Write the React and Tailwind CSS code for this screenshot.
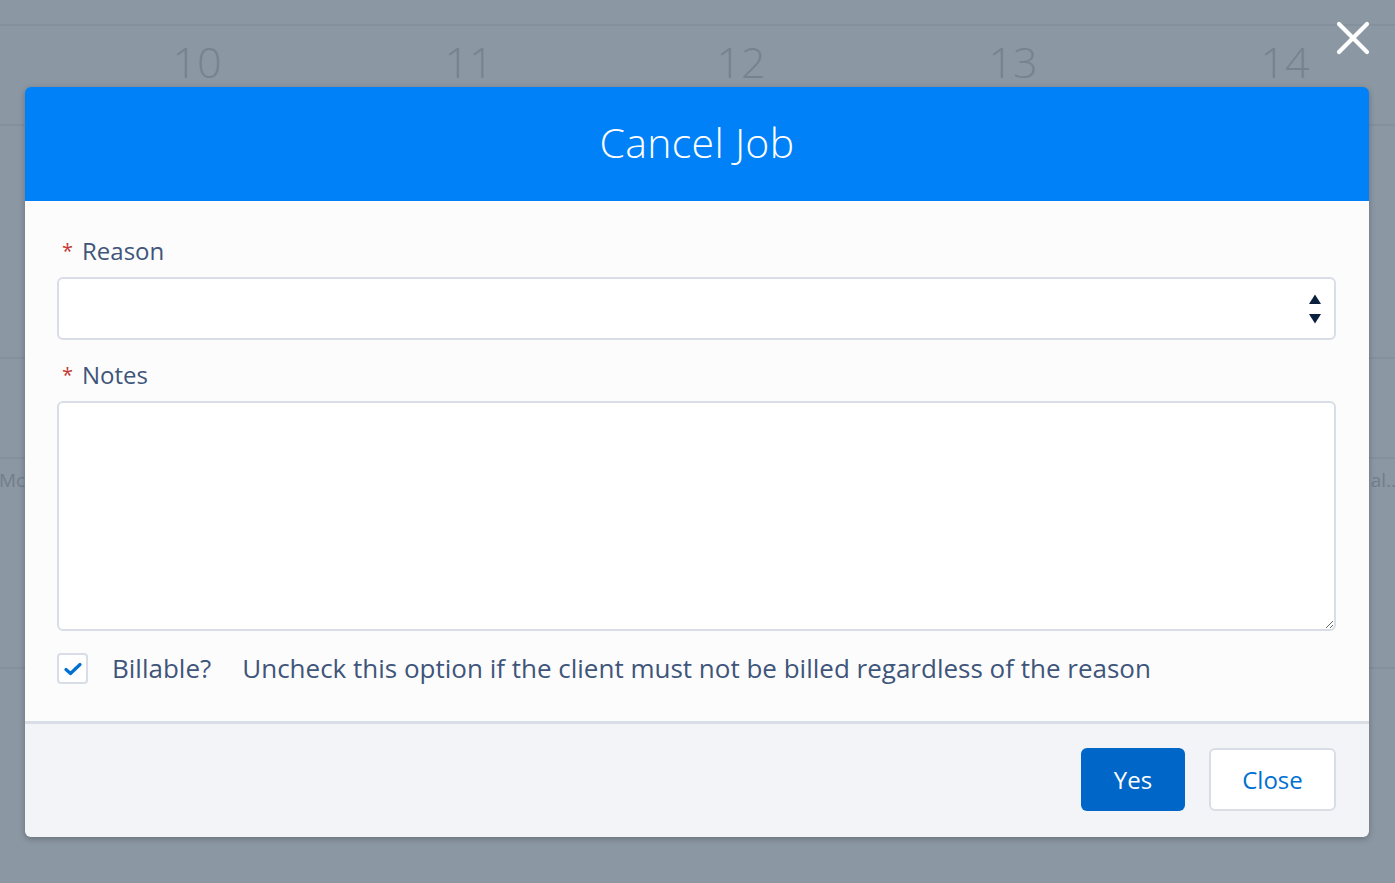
import React from "react";

const font = { fontFamily: '"Open Sans", "Liberation Sans", sans-serif' };

function Background() {
  const nums = ["10", "11", "12", "13", "14"];
  return (
    <div className="flex flex-col w-full h-full">
      <div className="h-[26px] border-b-2 border-[#84909c]" />
      <div className="flex h-[100px] border-b-2 border-[#84909c] pl-[61px]">
        {nums.map((n) => (
          <div key={n} className="w-[272px] shrink-0 flex justify-center pt-[14px] text-[43px] font-light text-[#76838f] leading-none">
            {n}
          </div>
        ))}
      </div>
      <div className="h-[233px] border-b-2 border-[#84909c]" />
      <div className="h-[100px] border-b-2 border-[#84909c]" />
      <div className="flex justify-between h-[210px] border-b-2 border-[#84909c] pt-[7px] text-[19px] text-[#717f8c]">
        <span className="-ml-[1px]">Mc</span>
        <span className="-mr-[6px]">al...</span>
      </div>
    </div>
  );
}

function Label({ children }) {
  return (
    <div className="flex items-center h-[36px] text-[24px] text-[#3f557a]">
      <span className="text-[#c23934] text-[20px] w-[25px] pl-[5px] leading-none">*</span>
      <span>{children}</span>
    </div>
  );
}

export default function App() {
  return (
    <div className="relative w-[1395px] h-[883px] overflow-hidden bg-[#8b97a3]" style={font}>
      <Background />

      <button className="absolute left-[1336px] top-[21px] w-[34px] h-[34px] flex items-center justify-center">
        <svg width="34" height="34" viewBox="0 0 34 34">
          <path d="M3 3 L31 31 M31 3 L3 31" stroke="white" strokeWidth="4.2" strokeLinecap="round" />
        </svg>
      </button>

      <div className="absolute left-[25px] top-[87px] w-[1344px] rounded-[6px] overflow-hidden shadow-[0_2px_6px_rgba(0,0,0,0.25)] flex flex-col">
        <div className="h-[114px] bg-[#0081f8] flex items-center justify-center">
          <h1 className="text-white text-[41px] font-light tracking-[0.3px] pb-[2px]">Cancel Job</h1>
        </div>

        <div className="bg-[#fcfcfd] pt-[32px] pl-[32px] pr-[33px] pb-[37px] flex flex-col">
          <Label>Reason</Label>
          <div className="mt-[8px] h-[63px] rounded-[6px] border-2 border-[#d8dde6] bg-white flex items-center justify-end pr-[12px]">
            <svg width="14" height="32" viewBox="0 0 14 32">
              <path d="M1 11 L7 1.5 L13 11 Z" fill="#0b1f3f" />
              <path d="M1 21 L13 21 L7 30.5 Z" fill="#0b1f3f" />
            </svg>
          </div>

          <div className="mt-[17px]">
            <Label>Notes</Label>
          </div>
          <textarea
            className="mt-[8px] h-[230px] rounded-[6px] border-2 border-[#d8dde6] bg-white outline-none resize-y"
          />

          <div className="mt-[22px] flex items-center h-[31px]">
            <div className="w-[31px] h-[31px] shrink-0 rounded-[4px] border-2 border-[#d8dde6] bg-white flex items-center justify-center">
              <svg width="18" height="14" viewBox="0 0 18 14">
                <path d="M2 7.5 L6.5 11.5 L16 2.5" stroke="#0070d2" strokeWidth="3.2" fill="none" strokeLinecap="round" strokeLinejoin="round" />
              </svg>
            </div>
            <span className="ml-[24px] text-[26px] text-[#3f557a] whitespace-nowrap">Billable?</span>
            <span className="ml-[31px] text-[26px] text-[#3f557a] whitespace-nowrap">
              Uncheck this option if the client must not be billed regardless of the reason
            </span>
          </div>
        </div>

        <div className="bg-[#f3f4f7] border-t-[3px] border-[#d8dde6] h-[116px] flex items-center justify-end pr-[33px] pb-[2px] gap-[24px]">
          <button className="w-[104px] h-[63px] rounded-[6px] bg-[#0067c8] text-white text-[24px]">Yes</button>
          <button className="w-[127px] h-[63px] rounded-[6px] bg-white border-2 border-[#d8dde6] text-[#0070d2] text-[24px]">Close</button>
        </div>
      </div>
    </div>
  );
}
